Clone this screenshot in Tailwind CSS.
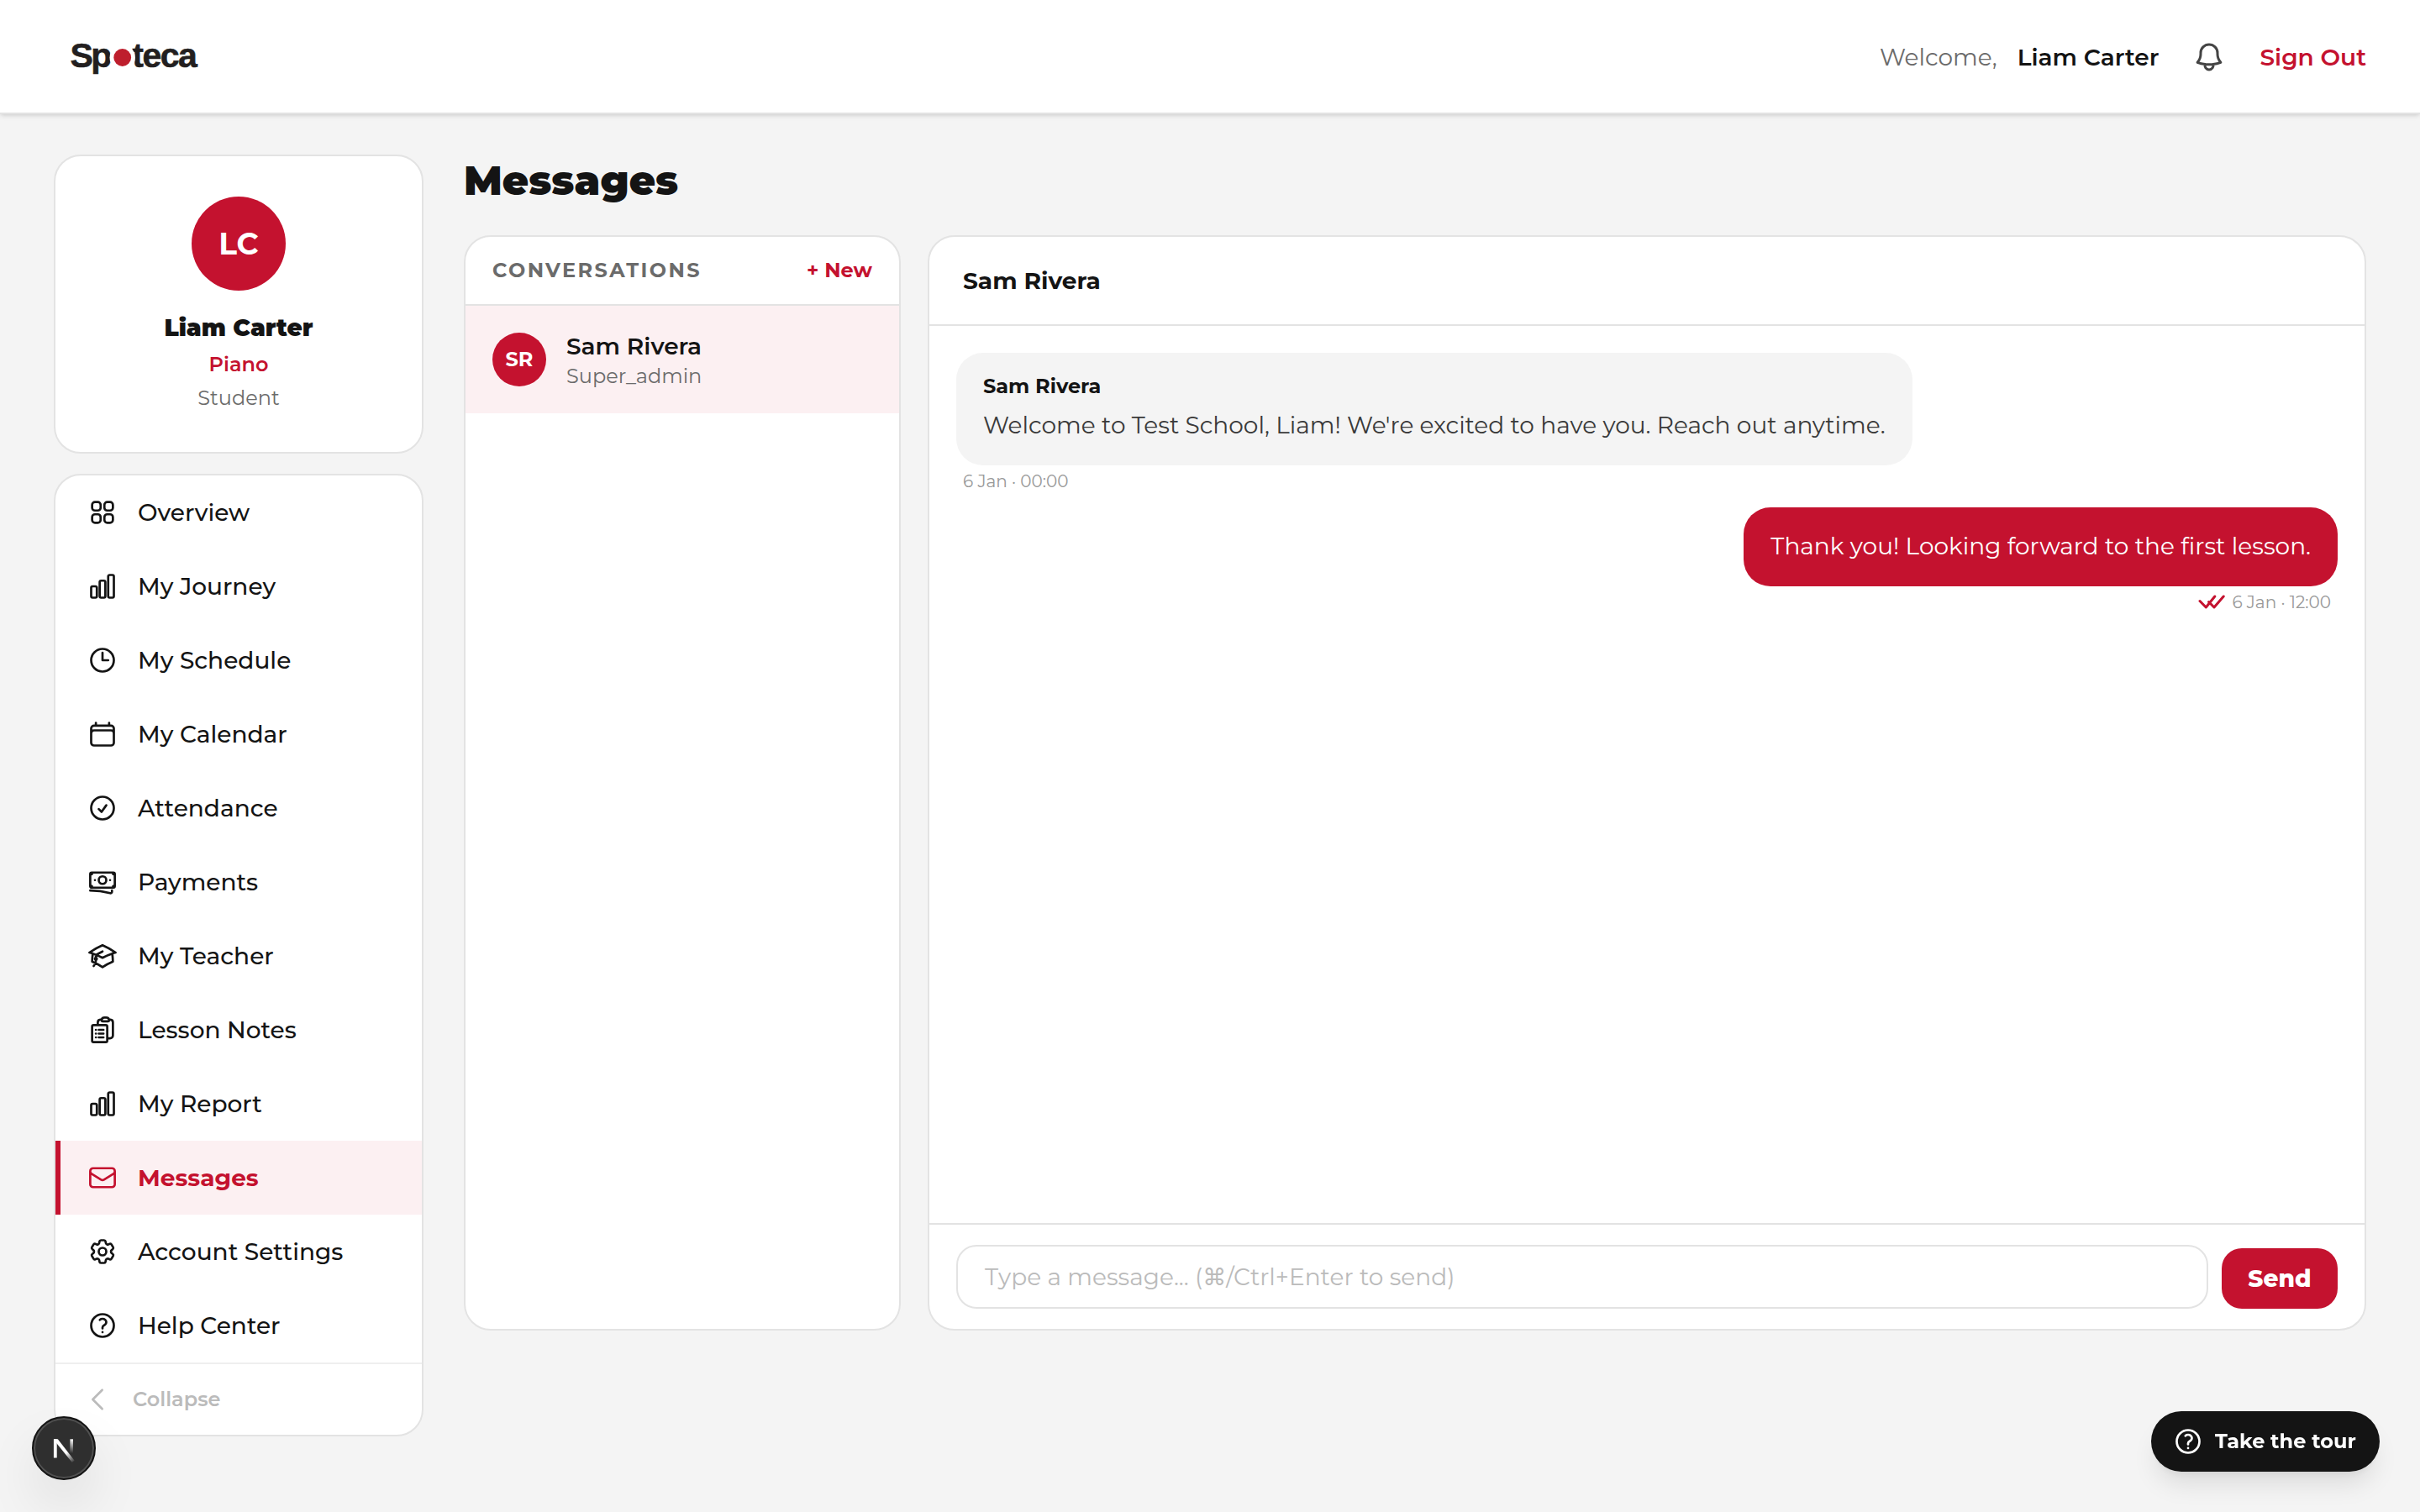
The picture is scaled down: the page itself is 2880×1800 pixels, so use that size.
<!DOCTYPE html>
<html lang="en">

<head>
	<title>Messages | Spoteca</title>
	<meta charset="UTF-8">
	<meta name="viewport" content="width=device-width, initial-scale=1.0">
	<script src="https://cdn.jsdelivr.net/npm/@tailwindcss/browser@4"></script>
</head>

<body class="h-[1800px] overflow-hidden bg-[#f4f4f4] font-['Montserrat','Inter','DejaVu_Sans',sans-serif] text-[28px] leading-[42px] text-[#141414]">

	<!-- Top bar -->
	<header class="flex h-[136px] items-center justify-between border-b-2 border-[#e3e3e3] bg-white pr-16 pl-20 shadow-[0_2px_6px_0_rgba(0,0,0,0.1),0_2px_4px_-2px_rgba(0,0,0,0.1)]">
		<svg class="h-[60px] w-[170px]" viewBox="0 0 170 60" role="img" aria-label="Spoteca">
			<g fill="#231f20" stroke="#231f20" stroke-width="0.6" font-family="Liberation Sans" font-weight="700" font-size="41">
				<text x="3.4" y="42.6" letter-spacing="-2.6">Sp</text>
				<text x="77.3" y="42.6" letter-spacing="-1.5">teca</text>
			</g>
			<circle cx="65.7" cy="31.5" r="15.2" fill="#fff" />
			<circle cx="65.7" cy="31.5" r="10.4" fill="#be1e2d" />
		</svg>
		<div class="flex items-center pt-0.5">
			<span class="text-[#6b6b6b]">Welcome,</span>
			<span class="ml-6 font-semibold">Liam Carter</span>
			<svg class="ml-10 size-10 text-[#444]" viewBox="0 0 24 24" fill="none" stroke="currentColor" stroke-width="1.8" stroke-linecap="round" stroke-linejoin="round">
				<path d="M14.857 17.082a23.848 23.848 0 0 0 5.454-1.31A8.967 8.967 0 0 1 18 9.75V9A6 6 0 0 0 6 9v.75a8.967 8.967 0 0 1-2.312 6.022c1.733.64 3.56 1.085 5.455 1.31m5.714 0a24.255 24.255 0 0 1-5.714 0m5.714 0a3 3 0 1 1-5.714 0" />
			</svg>
			<a href="#" class="ml-10 font-semibold text-[#c4122f]">Sign Out</a>
		</div>
	</header>

	<div class="flex items-start gap-12 px-16 pt-12">

		<!-- Sidebar -->
		<aside class="flex w-[440px] shrink-0 flex-col gap-6">
			<div class="flex h-[356px] flex-col items-center rounded-[32px] border-2 border-[#e3e3e3] bg-white pt-12">
				<div class="flex size-28 items-center justify-center rounded-full bg-[#c4122f] text-4xl font-bold text-white">LC</div>
				<div class="mt-[23px] mb-px font-black">Liam Carter</div>
				<div class="mt-1 text-2xl leading-9 font-semibold text-[#c4122f]">Piano</div>
				<div class="mt-1 text-2xl leading-9 text-[#6b6b6b]">Student</div>
			</div>

			<div class="overflow-hidden rounded-[32px] border-2 border-[#e3e3e3] bg-white">
				<nav id="nav"></nav>
				<button class="flex h-[86px] w-full items-center gap-6 border-t-2 border-[#efefef] pl-8 text-2xl font-semibold text-[#bbb]">
					<svg class="size-9" viewBox="0 0 24 24" fill="none" stroke="currentColor" stroke-width="1.8" stroke-linecap="round" stroke-linejoin="round">
						<path d="M15.75 19.5 8.25 12l7.5-7.5" />
					</svg>
					Collapse
				</button>
			</div>
		</aside>

		<main class="flex-1">
			<h1 class="mb-[34px] text-5xl leading-[62px] font-black">Messages</h1>

			<div class="flex h-[1304px] gap-8">

				<!-- Conversations -->
				<section class="w-[520px] shrink-0 overflow-hidden rounded-[32px] border-2 border-[#e3e3e3] bg-white">
					<div class="flex h-[82px] items-center justify-between border-b-2 border-[#e3e3e3] px-8 text-2xl font-bold">
						<h2 class="tracking-widest text-[#6b6b6b]">CONVERSATIONS</h2>
						<button class="text-[#c4122f]">+ New</button>
					</div>
					<div class="flex h-32 items-center gap-6 bg-[#fcf0f2] px-8">
						<div class="flex size-16 items-center justify-center rounded-full bg-[#c4122f] text-2xl font-bold text-white">SR</div>
						<div>
							<div class="leading-10 font-semibold">Sam Rivera</div>
							<div class="text-2xl leading-8 text-[#6b6b6b]">Super_admin</div>
						</div>
					</div>
				</section>

				<!-- Chat -->
				<section class="flex flex-1 flex-col rounded-[32px] border-2 border-[#e3e3e3] bg-white">
					<div class="flex h-[106px] items-center border-b-2 border-[#e3e3e3] px-10 font-bold">Sam Rivera</div>

					<div class="flex flex-1 flex-col gap-4 p-8">
						<div class="flex flex-col items-start">
							<div class="rounded-[32px] bg-[#f4f4f4] px-8 pt-6 pb-[25px]">
								<div class="mb-[7px] text-2xl leading-8 font-bold">Sam Rivera</div>
								<p class="leading-[46px] text-[#3a3a3a]">Welcome to Test School, Liam! We're excited to have you. Reach out anytime.</p>
							</div>
							<div class="mt-1 px-2 text-xl leading-[30px] text-[#999]">6 Jan · 00:00</div>
						</div>

						<div class="flex flex-col items-end">
							<div class="rounded-[32px] bg-[#c4122f] px-8 pt-[23px] pb-[25px] text-white">
								<p class="leading-[46px]">Thank you! Looking forward to the first lesson.</p>
							</div>
							<div class="mt-1 flex items-center gap-2 px-2 text-xl leading-[30px] text-[#999]">
								<svg class="h-5 w-8 text-[#c4122f]" viewBox="0 0 32 20" fill="none" stroke="currentColor" stroke-width="3" stroke-linecap="round" stroke-linejoin="round">
									<path d="M2 8.5 9.3 16 19.8 3M12.6 9.5 19 16 30.2 3" />
								</svg>
								6 Jan · 12:00
							</div>
						</div>
					</div>

					<div class="flex items-end gap-4 border-t-2 border-[#e3e3e3] px-8 py-6">
						<div class="flex h-[76px] flex-1 items-center rounded-3xl border-2 border-[#e3e3e3] px-8 text-[#bbb]">Type a message... (⌘/Ctrl+Enter to send)</div>
						<button class="h-[72px] w-[138px] rounded-3xl bg-[#c4122f] font-extrabold text-white">Send</button>
					</div>
				</section>
			</div>
		</main>
	</div>

	<!-- Tour button -->
	<button class="fixed right-12 bottom-12 flex h-[72px] w-[272px] items-center gap-3.5 rounded-full bg-[#141414] pl-[26px] text-2xl font-bold text-white shadow-[0_20px_30px_-6px_rgba(0,0,0,0.1),0_8px_12px_-8px_rgba(0,0,0,0.1)]">
		<svg class="size-9" viewBox="0 0 24 24" fill="none" stroke="currentColor" stroke-width="1.8" stroke-linecap="round" stroke-linejoin="round">
			<path d="M9.879 7.519c1.171-1.025 3.071-1.025 4.242 0 1.172 1.025 1.172 2.687 0 3.712-.203.179-.43.326-.67.442-.745.361-1.45.999-1.45 1.827v.75M21 12a9 9 0 1 1-18 0 9 9 0 0 1 18 0Zm-9 5.25h.008v.008H12v-.008Z" />
		</svg>
		Take the tour
	</button>

	<!-- Dev badge -->
	<div class="fixed bottom-[38px] left-[38px] size-[76px] rounded-full border-2 border-[#141414] bg-[#2f2f2f] shadow-[inset_0_0_0_2px_#505050,0_32px_64px_-4px_rgba(0,0,0,0.1)]">
		<svg class="size-[72px]" viewBox="0 0 72 72" fill="none">
			<defs>
				<linearGradient id="diag" x1="38" y1="42" x2="47" y2="54" gradientUnits="userSpaceOnUse">
					<stop stop-color="#fff" />
					<stop offset="1" stop-color="#fff" stop-opacity="0" />
				</linearGradient>
				<linearGradient id="stem" x1="45" y1="25" x2="45" y2="42" gradientUnits="userSpaceOnUse">
					<stop stop-color="#fff" />
					<stop offset="1" stop-color="#fff" stop-opacity="0" />
				</linearGradient>
			</defs>
			<path d="M25.8 47.5V25.3" stroke="#fff" stroke-width="3.8" />
			<path d="M24 25.3h4.8L48.6 50.8 45.8 53 24 26Z" fill="url(#diag)" />
			<path d="M45.2 25.3v17" stroke="url(#stem)" stroke-width="3.6" />
		</svg>
	</div>

	<script>
		const chart = "M3 13.125C3 12.504 3.504 12 4.125 12h2.25c.621 0 1.125.504 1.125 1.125v6.75C7.5 20.496 6.996 21 6.375 21h-2.25A1.125 1.125 0 0 1 3 19.875v-6.75ZM9.75 8.625c0-.621.504-1.125 1.125-1.125h2.25c.621 0 1.125.504 1.125 1.125v11.25c0 .621-.504 1.125-1.125 1.125h-2.25a1.125 1.125 0 0 1-1.125-1.125V8.625ZM16.5 4.125c0-.621.504-1.125 1.125-1.125h2.25C20.496 3 21 3.504 21 4.125v15.75c0 .621-.504 1.125-1.125 1.125h-2.25a1.125 1.125 0 0 1-1.125-1.125V4.125Z";

		const items = [
			["Overview", "M3.75 6A2.25 2.25 0 0 1 6 3.75h2.25A2.25 2.25 0 0 1 10.5 6v2.25a2.25 2.25 0 0 1-2.25 2.25H6a2.25 2.25 0 0 1-2.25-2.25V6ZM3.75 15.75A2.25 2.25 0 0 1 6 13.5h2.25a2.25 2.25 0 0 1 2.25 2.25V18a2.25 2.25 0 0 1-2.25 2.25H6A2.25 2.25 0 0 1 3.75 18v-2.25ZM13.5 6a2.25 2.25 0 0 1 2.25-2.25H18A2.25 2.25 0 0 1 20.25 6v2.25A2.25 2.25 0 0 1 18 10.5h-2.25a2.25 2.25 0 0 1-2.25-2.25V6ZM13.5 15.75a2.25 2.25 0 0 1 2.25-2.25H18a2.25 2.25 0 0 1 2.25 2.25V18A2.25 2.25 0 0 1 18 20.25h-2.25A2.25 2.25 0 0 1 13.5 18v-2.25Z"],
			["My Journey", chart],
			["My Schedule", "M12 6v6h4.5M21 12a9 9 0 1 1-18 0 9 9 0 0 1 18 0Z"],
			["My Calendar", "M6.75 3v2.25M17.25 3v2.25M3 18.75V7.5a2.25 2.25 0 0 1 2.25-2.25h13.5A2.25 2.25 0 0 1 21 7.5v11.25m-18 0A2.25 2.25 0 0 0 5.25 21h13.5A2.25 2.25 0 0 0 21 18.75m-18 0v-7.5A2.25 2.25 0 0 1 5.25 9h13.5A2.25 2.25 0 0 1 21 11.25v7.5"],
			["Attendance", "M9 12.75 11.25 15 15 9.75M21 12a9 9 0 1 1-18 0 9 9 0 0 1 18 0Z"],
			["Payments", "M2.25 18.75a60.07 60.07 0 0 1 15.797 2.101c.727.198 1.453-.342 1.453-1.096V18.75M3.75 4.5v.75A.75.75 0 0 1 3 6h-.75m0 0v-.375c0-.621.504-1.125 1.125-1.125H20.25M2.25 6v9m18-10.5v.75c0 .414.336.75.75.75h.75m-1.5-1.5h.375c.621 0 1.125.504 1.125 1.125v9.75c0 .621-.504 1.125-1.125 1.125h-.375m1.5-1.5H21a.75.75 0 0 0-.75.75v.75m0 0H3.75m0 0h-.375a1.125 1.125 0 0 1-1.125-1.125V15m1.5 1.5v-.75A.75.75 0 0 0 3 15h-.75M15 10.5a3 3 0 1 1-6 0 3 3 0 0 1 6 0Zm3 0h.008v.008H18V10.5Zm-12 0h.008v.008H6V10.5Z"],
			["My Teacher", "M4.26 10.147a60.438 60.438 0 0 0-.491 6.347A48.62 48.62 0 0 1 12 20.904a48.62 48.62 0 0 1 8.232-4.41 60.46 60.46 0 0 0-.491-6.347m-15.482 0a50.636 50.636 0 0 0-2.658-.813A59.906 59.906 0 0 1 12 3.493a59.903 59.903 0 0 1 10.399 5.84c-.896.248-1.783.52-2.658.814m-15.482 0A50.717 50.717 0 0 1 12 13.489a50.702 50.702 0 0 1 7.74-3.342M6.75 15a.75.75 0 1 0 0-1.5.75.75 0 0 0 0 1.5Zm0 0v-3.675A55.378 55.378 0 0 1 12 8.443m-7.007 11.55A5.981 5.981 0 0 0 6.75 15.75v-1.5"],
			["Lesson Notes", "M9 12h3.75M9 15h3.75M9 18h3.75m3 .75H18a2.25 2.25 0 0 0 2.25-2.25V6.108c0-1.135-.845-2.098-1.976-2.192a48.424 48.424 0 0 0-1.123-.08m-5.801 0c-.065.21-.1.433-.1.664 0 .414.336.75.75.75h4.5a.75.75 0 0 0 .75-.75 2.25 2.25 0 0 0-.1-.664m-5.8 0A2.251 2.251 0 0 1 13.5 2.25H15c1.012 0 1.867.668 2.15 1.586m-5.8 0c-.376.023-.75.05-1.124.08C9.095 4.01 8.25 4.973 8.25 6.108V8.25m0 0H4.875c-.621 0-1.125.504-1.125 1.125v11.25c0 .621.504 1.125 1.125 1.125h9.75c.621 0 1.125-.504 1.125-1.125V9.375c0-.621-.504-1.125-1.125-1.125H8.25ZM6.75 12h.008v.008H6.75V12Zm0 3h.008v.008H6.75V15Zm0 3h.008v.008H6.75V18Z"],
			["My Report", chart],
			["Messages", "M21.75 6.75v10.5a2.25 2.25 0 0 1-2.25 2.25h-15a2.25 2.25 0 0 1-2.25-2.25V6.75m19.5 0A2.25 2.25 0 0 0 19.5 4.5h-15a2.25 2.25 0 0 0-2.25 2.25m19.5 0v.243a2.25 2.25 0 0 1-1.07 1.916l-7.5 4.615a2.25 2.25 0 0 1-2.36 0L3.32 8.91a2.25 2.25 0 0 1-1.07-1.916V6.75"],
			["Account Settings", "M9.594 3.94c.09-.542.56-.94 1.11-.94h2.593c.55 0 1.02.398 1.11.94l.213 1.281c.063.374.313.686.645.87.074.04.147.083.22.127.325.196.72.257 1.075.124l1.217-.456a1.125 1.125 0 0 1 1.37.49l1.296 2.247a1.125 1.125 0 0 1-.26 1.431l-1.003.827c-.293.241-.438.613-.43.992a7.723 7.723 0 0 1 0 .255c-.008.378.137.75.43.991l1.004.827c.424.35.534.955.26 1.43l-1.298 2.247a1.125 1.125 0 0 1-1.369.491l-1.217-.456c-.355-.133-.75-.072-1.076.124a6.47 6.47 0 0 1-.22.128c-.331.183-.581.495-.644.869l-.213 1.281c-.09.543-.56.94-1.11.94h-2.594c-.55 0-1.019-.398-1.11-.94l-.213-1.281c-.062-.374-.312-.686-.644-.87a6.52 6.52 0 0 1-.22-.127c-.325-.196-.72-.257-1.076-.124l-1.217.456a1.125 1.125 0 0 1-1.369-.49l-1.297-2.247a1.125 1.125 0 0 1 .26-1.431l1.004-.827c.292-.24.437-.613.43-.991a6.932 6.932 0 0 1 0-.255c.007-.38-.138-.751-.43-.992l-1.004-.827a1.125 1.125 0 0 1-.26-1.43l1.297-2.247a1.125 1.125 0 0 1 1.37-.491l1.216.456c.356.133.751.072 1.076-.124.072-.044.146-.086.22-.128.332-.183.582-.495.644-.869l.214-1.28ZM15 12a3 3 0 1 1-6 0 3 3 0 0 1 6 0Z"],
			["Help Center", "M9.879 7.519c1.171-1.025 3.071-1.025 4.242 0 1.172 1.025 1.172 2.687 0 3.712-.203.179-.43.326-.67.442-.745.361-1.45.999-1.45 1.827v.75M21 12a9 9 0 1 1-18 0 9 9 0 0 1 18 0Zm-9 5.25h.008v.008H12v-.008Z"]
		];

		let html = "";
		for (let [label, icon] of items) {
			// Messages is the open page
			const state = label === "Messages"
				? "border-[#c4122f] bg-[#fcf0f2] font-bold text-[#c4122f]"
				: "border-transparent font-medium";
			html += `
				<a href="#" class="flex h-[88px] items-center gap-6 border-l-[6px] pl-8 ${state}">
					<svg class="size-9" viewBox="0 0 24 24" fill="none" stroke="currentColor" stroke-width="1.8" stroke-linecap="round" stroke-linejoin="round"><path d="${icon}" /></svg>
					${label}
				</a>`;
		}
		document.getElementById("nav").innerHTML = html;
	</script>
</body>

</html>
